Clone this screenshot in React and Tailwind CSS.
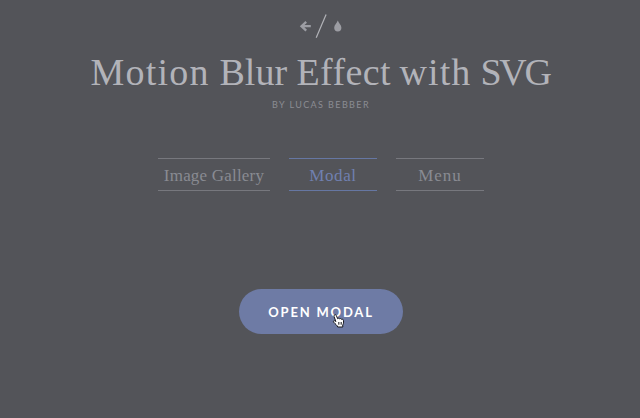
const links = [
  { label: 'Image Gallery', style: 'w-[112px] border-[#77787e] text-[#898b92] tracking-[0.2px]' },
  { label: 'Modal', style: 'w-[88px] border-[#6677a3] text-[#7080b0] tracking-[0.6px]' },
  { label: 'Menu', style: 'w-[88px] border-[#77787e] text-[#898b92] tracking-[1px]' },
];

const titleWords = [
  { word: 'Motion', style: 'w-[129px] tracking-[1.2px]' },
  { word: 'Blur', style: 'w-[77px] tracking-[0px]' },
  { word: 'Effect', style: 'w-[103px] tracking-[0.4px]' },
  { word: 'with', style: 'w-[81px] tracking-[1.1px]' },
  { word: 'SVG', style: 'w-[71px] tracking-[-2.3px]' },
];

function TopIcons() {
  return (
    <svg width="44" height="28" viewBox="0 0 44 28" aria-hidden="true">
      <path d="M8.2 7.8L3.5 12.2L8.2 16.6M4.2 12.2H12.8" fill="none" stroke="#9c9da3" strokeWidth="2.3" />
      <path d="M28.1 0.6L18.2 23.8" stroke="#b2b3b8" strokeWidth="1.2" />
      <path d="M39.8 6.6C38.7 9.4 36.2 11.1 36.2 13.8A3.6 3.6 0 0 0 43.4 13.8C43.4 11.1 40.9 9.4 39.8 6.6Z" fill="#9c9da3" />
    </svg>
  );
}

function HandCursor() {
  return (
    <svg className="absolute left-[93px] top-[25px]" width="13" height="14" viewBox="0 0 13 14" aria-hidden="true">
      <path
        d="M2.3 1.2C3.1.2 4.1.8 4.4 1.7L5.6 4.7C6.3 4 7.2 4.2 7.5 4.9C8.2 4.3 9.1 4.5 9.4 5.3C10.5 4.8 11.4 5.5 11.5 6.7C11.7 8.8 11.4 10 10.7 11L10.8 13H5.7C5.2 11.2 3.4 10.2 1.8 8.3C.7 6.9 2.1 6.2 3.4 7.2L3.9 7.6L2.1 2.7C1.9 2.1 1.9 1.6 2.3 1.2Z"
        fill="#fff" stroke="#16171d" strokeWidth="1"
      />
      <path d="M6.5 8V10.7M8 8V10.7M9.5 8V10.7" stroke="#16171d" strokeWidth=".7" />
    </svg>
  );
}

export default function App() {
  return (
    <main className="flex h-[418px] w-[640px] flex-col items-center overflow-hidden bg-[#535459]">
      <header className="flex flex-col items-center pl-[2px] pt-[14px]">
        <div className="h-[28px] pr-[3px]"><TopIcons /></div>
        <h1 className="mt-[8px] flex h-[44px] whitespace-nowrap font-['Liberation_Serif',serif] text-[38px] leading-[44px] text-[#b2b3b9]">
          {titleWords.map(({ word, style }) => (
            <span key={word} className={style}>{word}{' '}</span>
          ))}
        </h1>
        <p className="mt-[4px] whitespace-nowrap font-[Lato,sans-serif] text-[9px] leading-[13px] tracking-[1.4px] text-[#8b8c93]">
          BY LUCAS BEBBER
        </p>
      </header>
      <nav className="mt-[47px] flex gap-[19px] pl-[2px]">
        {links.map(({ label, style }) => (
          <a key={label} className={`flex h-[33px] items-center justify-center whitespace-nowrap border-y pt-[3px] font-['Liberation_Serif',serif] text-[17px] leading-[20px] ${style}`}>
            {label}
          </a>
        ))}
      </nav>
      <button className="relative ml-[2px] mt-[98px] h-[45px] w-[164px] rounded-full bg-[#6e7ba5] font-[Lato,sans-serif] text-[13px] font-bold leading-[20px] tracking-[1.8px] text-white">
        OPEN MODAL
        <HandCursor />
      </button>
    </main>
  );
}
